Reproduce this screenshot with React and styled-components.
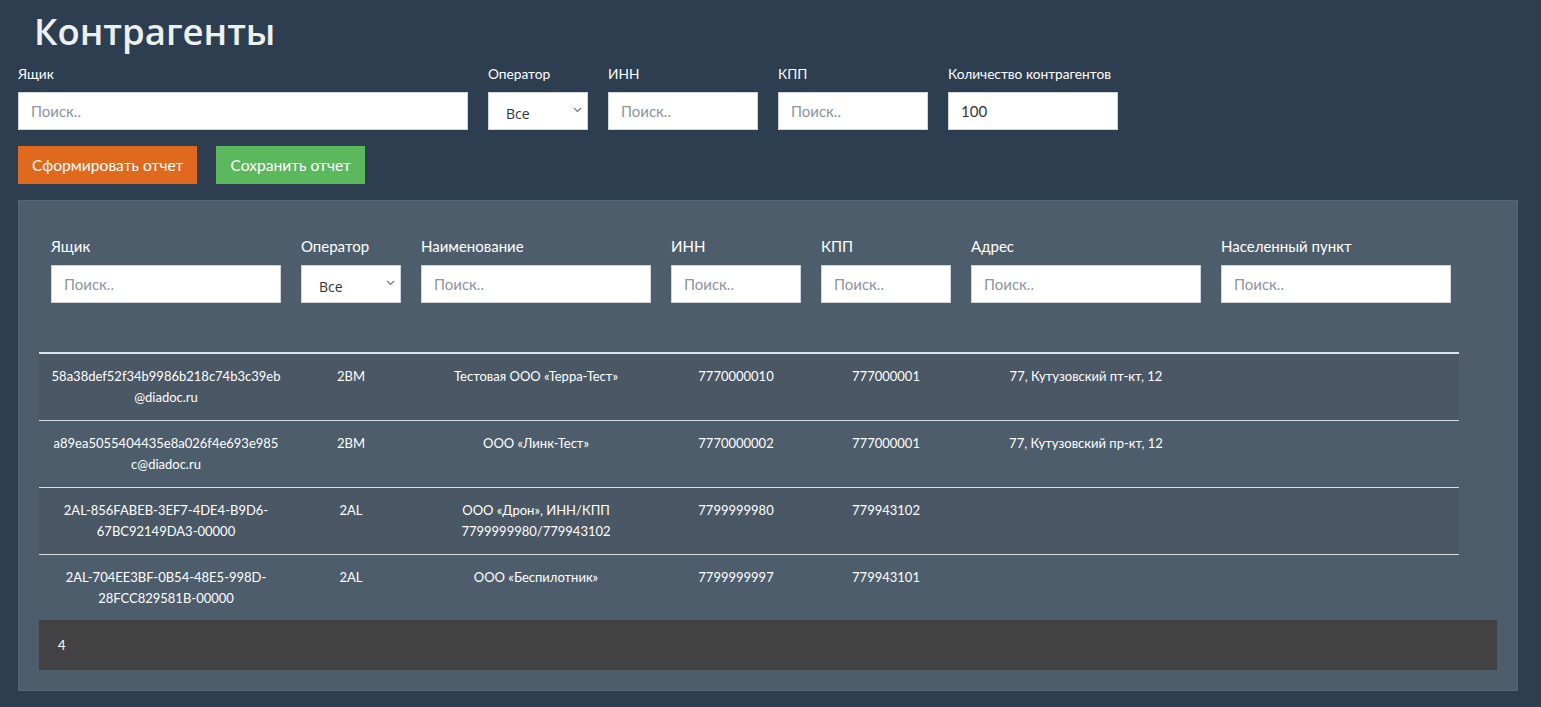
import styled, { createGlobalStyle } from "styled-components";

const GlobalStyle = createGlobalStyle`
  html, body {
    margin: 0;
    padding: 0;
    background: #2c3e50;
    font-family: Lato, "Open Sans", sans-serif;
    color: #fff;
  }
  * { box-sizing: border-box; }
`;

const columns = [
  { key: "box", label: "Ящик", width: 230 },
  { key: "operator", label: "Оператор", width: 100, select: true },
  { key: "name", label: "Наименование", width: 230 },
  { key: "inn", label: "ИНН", width: 130 },
  { key: "kpp", label: "КПП", width: 130 },
  { key: "address", label: "Адрес", width: 230 },
  { key: "city", label: "Населенный пункт", width: 230 },
];

const rows = [
  {
    box: "58a38def52f34b9986b218c74b3c39eb@diadoc.ru",
    operator: "2BM",
    name: "Тестовая ООО «Терра-Тест»",
    inn: "7770000010",
    kpp: "777000001",
    address: "77, Кутузовский пт-кт, 12",
    city: "",
  },
  {
    box: "a89ea5055404435e8a026f4e693e985c@diadoc.ru",
    operator: "2BM",
    name: "ООО «Линк-Тест»",
    inn: "7770000002",
    kpp: "777000001",
    address: "77, Кутузовский пр-кт, 12",
    city: "",
  },
  {
    box: "2AL-856FABEB-3EF7-4DE4-B9D6-67BC92149DA3-00000",
    operator: "2AL",
    name: "ООО «Дрон», ИНН/КПП 7799999980/779943102",
    inn: "7799999980",
    kpp: "779943102",
    address: "",
    city: "",
  },
  {
    box: "2AL-704EE3BF-0B54-48E5-998D-28FCC829581B-00000",
    operator: "2AL",
    name: "ООО «Беспилотник»",
    inn: "7799999997",
    kpp: "779943101",
    address: "",
    city: "",
  },
];

const gridTemplate = columns.map((c) => `${c.width}px`).join(" ");

const Chevron = () => (
  <svg width="9" height="6" viewBox="0 0 9 6">
    <path d="M1 1l3.5 3.5L8 1" fill="none" stroke="#777" strokeWidth="1.2" />
  </svg>
);

const SelectBox = ({ width }) => (
  <SelectWrap $width={width}>
    <Select defaultValue="all">
      <option value="all">Все</option>
      <option value="2BM">2BM</option>
      <option value="2AL">2AL</option>
    </Select>
    <ChevronSlot>
      <Chevron />
    </ChevronSlot>
  </SelectWrap>
);

const App = () => {
  return (
    <Page>
      <GlobalStyle />
      <Title>Контрагенты</Title>

      <TopFilters>
        <Field>
          <TopLabel>Ящик</TopLabel>
          <Input $width={450} placeholder="Поиск.." />
        </Field>
        <Field>
          <TopLabel>Оператор</TopLabel>
          <SelectBox width={100} />
        </Field>
        <Field>
          <TopLabel>ИНН</TopLabel>
          <Input $width={150} placeholder="Поиск.." />
        </Field>
        <Field>
          <TopLabel>КПП</TopLabel>
          <Input $width={150} placeholder="Поиск.." />
        </Field>
        <Field>
          <TopLabel>Количество контрагентов</TopLabel>
          <Input $width={170} defaultValue="100" />
        </Field>
      </TopFilters>

      <Actions>
        <Button $color="#e0691d">Сформировать отчет</Button>
        <Button $color="#5cb85c">Сохранить отчет</Button>
      </Actions>

      <Panel>
        <ColumnFilters>
          {columns.map((c) => (
            <Field key={c.key}>
              <ColLabel>{c.label}</ColLabel>
              {c.select ? (
                <SelectBox width={c.width} />
              ) : (
                <Input $width={c.width} placeholder="Поиск.." />
              )}
            </Field>
          ))}
        </ColumnFilters>

        <Table>
          {rows.map((r, i) => (
            <Row key={i} $striped={i % 2 === 0} $last={i === rows.length - 1}>
              {columns.map((c) => (
                <Cell key={c.key}>{r[c.key]}</Cell>
              ))}
            </Row>
          ))}
        </Table>

        <Footer>{rows.length}</Footer>
      </Panel>
    </Page>
  );
};
export default App;

const Page = styled.div`
  min-height: 100vh;
  padding: 7px 23px 17px 18px;
`;

const Title = styled.h1`
  margin: 0 0 10px 16px;
  font-family: "Open Sans", sans-serif;
  font-weight: 600;
  font-size: 36.5px;
  line-height: 48px;
  color: #ecf0f1;
`;

const TopFilters = styled.div`
  display: flex;
  gap: 20px;
  align-items: flex-end;
`;

const ColumnFilters = styled.div`
  display: flex;
  gap: 20px;
  padding-left: 12px;
`;

const Field = styled.div`
  display: flex;
  flex-direction: column;
`;

const TopLabel = styled.label`
  font-size: 13.7px;
  line-height: 18px;
  margin-bottom: 9px;
  color: #fff;
`;

const ColLabel = styled.label`
  font-size: 15px;
  line-height: 20px;
  margin-bottom: 9px;
  color: #fff;
`;

const Input = styled.input`
  width: ${(p) => p.$width}px;
  height: 38px;
  padding: 0 12px;
  border: 1px solid #d2d6dc;
  background: #fff;
  font-family: Lato, sans-serif;
  font-size: 15px;
  color: #333;
  outline: none;
  &::placeholder {
    color: #8c96a0;
  }
`;

const SelectWrap = styled.div`
  position: relative;
  width: ${(p) => p.$width}px;
  height: 38px;
`;

const Select = styled.select`
  appearance: none;
  width: 100%;
  height: 100%;
  padding: 4px 0 0 17px;
  border: 1px solid #d2d6dc;
  border-radius: 0;
  background: #fff;
  font-family: "Open Sans", sans-serif;
  font-size: 14px;
  color: #333;
  outline: none;
`;

const ChevronSlot = styled.span`
  position: absolute;
  right: 6px;
  top: 15px;
  display: flex;
  pointer-events: none;
`;

const Actions = styled.div`
  display: flex;
  gap: 19px;
  margin: 16px 0;
`;

const Button = styled.button`
  height: 38px;
  padding: 0 14px;
  border: none;
  background: ${(p) => p.$color};
  color: #fff;
  font-family: Lato, sans-serif;
  font-size: 15.6px;
  cursor: pointer;
`;

const Panel = styled.div`
  background: #4d5d6c;
  border: 1px solid #55667a;
  padding: 35px 20px 20px;
`;

const Table = styled.div`
  width: 1420px;
  margin-top: 49px;
  border-top: 2px solid #dfe3e8;
`;

const Row = styled.div`
  display: grid;
  grid-template-columns: ${gridTemplate};
  column-gap: 20px;
  padding: 12px 0 ${(p) => (p.$last ? "10px" : "12px")} 12px;
  min-height: ${(p) => (p.$last ? "65px" : "67px")};
  background: ${(p) => (p.$striped ? "#4a5765" : "transparent")};
  border-bottom: ${(p) => (p.$last ? "none" : "1px solid #d9dde2")};
`;

const Cell = styled.div`
  font-size: 13px;
  line-height: 21px;
  text-align: center;
  overflow-wrap: anywhere;
  color: #fff;
`;

const Footer = styled.div`
  height: 50px;
  display: flex;
  align-items: center;
  padding-left: 19px;
  background: #424242;
  font-size: 13px;
  color: #fff;
`;
